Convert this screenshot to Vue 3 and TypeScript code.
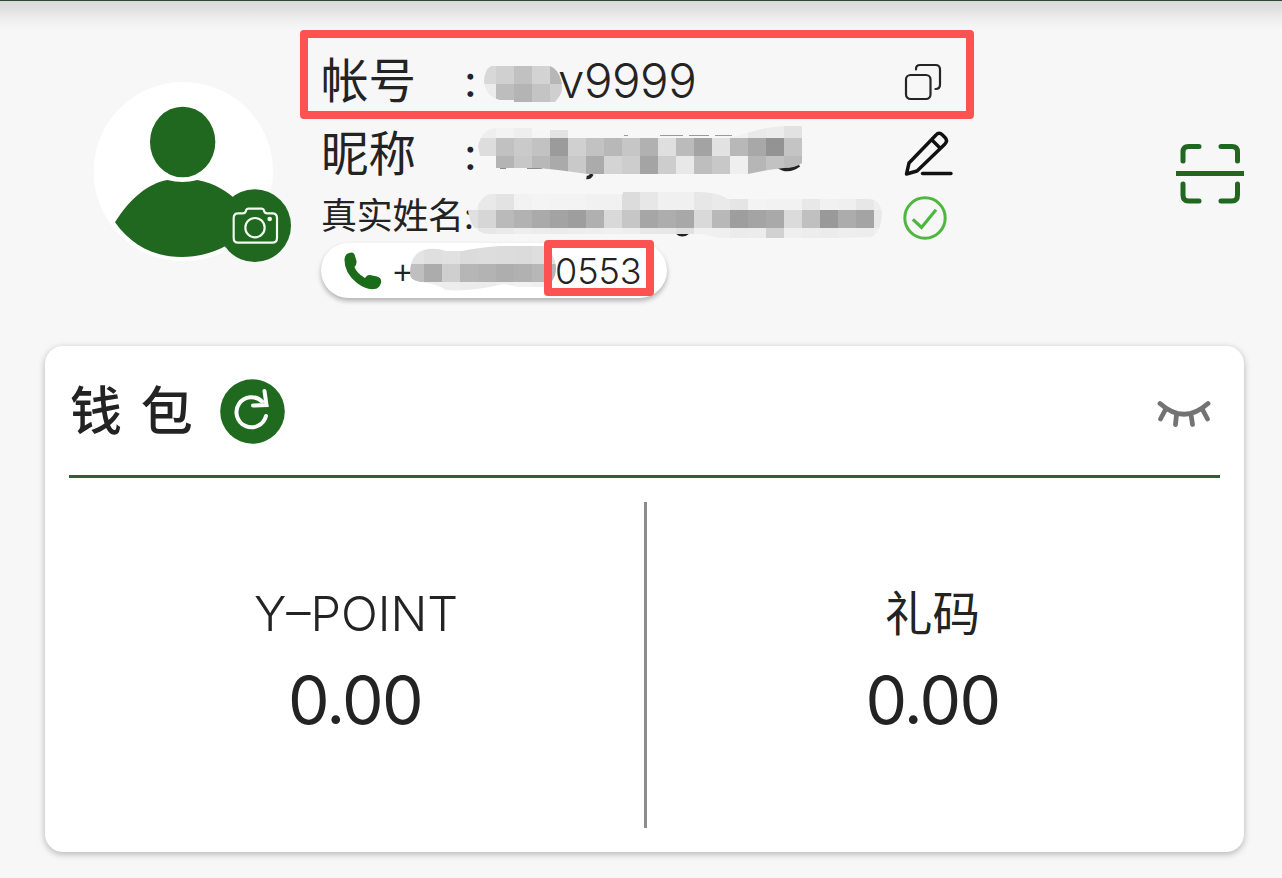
<script setup lang="ts">
interface Strip { x: number; y: number; h: number; first?: number; cells: string }
interface Mask { id: string; w: number; h: number; clip: string; strips: Strip[] }
interface Cell { x: number; y: number; w: number; h: number; fill: string }

const CELL = 18

function cellsOf(mask: Mask): Cell[] {
  return mask.strips.flatMap((s) => {
    let x = s.x
    return s.cells.split(' ').map((tone, i) => {
      const w = i === 0 && s.first ? s.first : CELL
      const cell = { x, y: s.y, w, h: s.h, fill: '#' + tone.repeat(3) }
      x += w
      return cell
    })
  })
}

const accountMask: Mask = {
  id: 'mask-account', w: 78, h: 36,
  clip: 'M7 0H66Q74 3 77 14Q80 24 75 31L71 36H30V34H16Q2 31 0 16Q0 4 7 0Z',
  strips: [
    { x: 0, y: 0, h: 18, first: 12, cells: 'd8 d0 c1 d3 b7' },
    { x: 0, y: 18, h: 18, first: 12, cells: 'ec bd b4 c4 cf' },
  ],
}
const nickMask: Mask = {
  id: 'mask-nick', w: 324, h: 48,
  clip: 'M0 20Q4 3 18 2H54V4H90V12H250L288 2L306 0H324V37Q318 42 306 42L290 44L270 48H110L80 44L60 42H18V30H2Z',
  strips: [
    { x: 0, y: 0, h: 12, cells: 'ee f3 ee f5 e3 f6 f6 f6 f6 f6 f6 f6 f6 f6 f2 e9 ec e2' },
    { x: 0, y: 12, h: 18, cells: 'dd c1 ca c2 9b d0 c2 b8 c6 b1 df bb a3 e2 b8 a8 93 c4' },
    { x: 0, y: 30, h: 18, cells: 'f4 b4 c7 b8 aa c9 ab d4 cd a4 cd e8 be c8 ef b6 c2 bb' },
  ],
}
const nameMask: Mask = {
  id: 'mask-name', w: 414, h: 48,
  clip: 'M0 18L8 18Q14 2 24 2H155V0H230Q250 0 260 7H400Q412 7 414 20Q414 38 404 45L370 46H250L235 42L20 42Q2 40 0 18Z',
  strips: [
    { x: 0, y: 0, h: 18, first: 10, cells: 'f2 e9 e3 f2 f4 f3 f3 f1 f1 dc e7 f0 f0 e7 ea e5 f3 f2 f2 e8 f1 ef e7 ee' },
    { x: 0, y: 18, h: 18, first: 10, cells: 'e0 d6 ba b2 aa a3 9e b0 d9 c6 a6 ad a8 d9 b8 9e a4 a9 db c0 99 ac a4 e9' },
    { x: 0, y: 36, h: 12, first: 10, cells: 'f0 e7 ea ee ec eb ed ee f0 ee e8 e7 e0 f0 ef eb ec d1 ef ed eb ee ed f0' },
  ],
}
const phoneMask: Mask = {
  id: 'mask-phone', w: 146, h: 46,
  clip: 'M0 28Q0 8 14 4Q25 1 36 5H52Q66 2 90 0H133Q146 8 146 23Q146 35 134 41H108L94 38Q60 46 36 44Q28 38 10 36Q0 34 0 28Z',
  strips: [
    { x: 0, y: 0, h: 18, first: 14, cells: 'e4 df e1 db dd dc db de e0' },
    { x: 0, y: 18, h: 18, first: 14, cells: 'bf ac cf b6 b3 ae b1 b7 b5' },
    { x: 0, y: 36, h: 10, first: 14, cells: 'f3 ef ed eb eb f0 f1 ef f0' },
  ],
}

const balances = [
  { name: 'Y–POINT', amount: '0.00', latin: true },
  { name: '礼码', amount: '0.00', latin: false },
]
</script>

<template>
  <main class="page">
    <div class="topbar"></div>
    <header class="profile">
      <svg class="avatar" viewBox="30 30 612 561">
        <circle cx="310" cy="305" r="269" fill="#fff" />
        <g fill="#206720">
          <ellipse cx="308" cy="216" rx="98" ry="106" />
          <path d="M105 457C150 385 205 340 262 330Q308 342 352 330C405 340 440 362 480 400L500 480C440 540 370 561 305 561C215 561 150 520 105 457Z" />
          <circle cx="524" cy="467" r="109" />
        </g>
        <g fill="none" stroke="#f1fbef" stroke-width="6.500" stroke-linejoin="round">
          <path d="M474 430H488Q497 430 498 422Q499 416 506 416H544Q551 416 552 422Q553 430 562 430H577Q591 430 591 444V504Q591 518 577 518H474Q461 518 461 504V444Q461 430 474 430Z" />
          <circle cx="525" cy="473" r="29" />
        </g>
        <circle cx="569" cy="447" r="7" fill="#f1fbef" />
      </svg>

      <section class="info">
        <div class="row account">
          <span class="label">帐号</span><span class="colon">:</span>
          <span class="value">v9999</span>
          <svg class="mask mask-account" :width="accountMask.w" :height="accountMask.h">
            <clipPath :id="accountMask.id"><path :d="accountMask.clip" /></clipPath>
            <g :clip-path="`url(#${accountMask.id})`" shape-rendering="crispEdges">
              <rect v-for="(c, i) in cellsOf(accountMask)" :key="i" :x="c.x" :y="c.y" :width="c.w" :height="c.h" :fill="c.fill" />
            </g>
          </svg>
          <svg class="copy" viewBox="0 0 38 38" fill="none" stroke="#252525" stroke-width="2.200" stroke-linecap="round">
            <rect x="2" y="12" width="24.5" height="24" rx="4.5" />
            <path d="M12 6.5V6Q12 2 16 2H31.5Q36 2 36 6.500V21.500Q36 26 31.500 26" />
          </svg>
        </div>

        <div class="row nick">
          <span class="label">昵称</span><span class="colon">:</span>
          <svg class="mask mask-nick" width="324" height="56">
            <g fill="none" stroke="#222" stroke-width="2">
              <path d="M146 9.500H150M182 9.500H205M211 9.500H231M237 9.500H254" stroke="#999" stroke-width="1" />
              <path d="M114 48Q112 52 108.500 51.500" stroke-width="3.500" />
              <path d="M22 41.500H28M49 41.500H64" />
              <path d="M300 40Q310 47 321 39" stroke-width="4" />
            </g>
            <clipPath :id="nickMask.id"><path :d="nickMask.clip" /></clipPath>
            <g :clip-path="`url(#${nickMask.id})`" shape-rendering="crispEdges">
              <rect v-for="(c, i) in cellsOf(nickMask)" :key="i" :x="c.x" :y="c.y" :width="c.w" :height="c.h" :fill="c.fill" />
            </g>
          </svg>
          <svg class="edit" viewBox="0 0 50 48" fill="none" stroke="#111" stroke-width="3.400" stroke-linejoin="round" stroke-linecap="round">
            <path d="M3.500 44L6 33L33 5Q36 1.500 39.500 5L42 7.500Q45 10.500 42 14L14 41Z M28.500 9.500L37 18" />
            <path d="M19.500 43.500H48" />
          </svg>
        </div>

        <div class="row realname">
          <span class="label small">真实姓名:</span>
          <svg class="mask mask-name" width="414" height="48">
            <path d="M208 40Q214 46 221 40" fill="none" stroke="#222" stroke-width="3" />
            <clipPath :id="nameMask.id"><path :d="nameMask.clip" /></clipPath>
            <g :clip-path="`url(#${nameMask.id})`" shape-rendering="crispEdges">
              <rect v-for="(c, i) in cellsOf(nameMask)" :key="i" :x="c.x" :y="c.y" :width="c.w" :height="c.h" :fill="c.fill" />
            </g>
          </svg>
          <svg class="verified" viewBox="0 0 44 44" fill="none" stroke="#4db73e" stroke-width="3" stroke-linecap="round">
            <circle cx="22" cy="22" r="20.200" />
            <path d="M11 24.500L18.500 31.500L32 15" stroke-width="3.200" stroke-linecap="square" />
          </svg>
        </div>

        <div class="phone">
          <svg class="handset" viewBox="0 0 38 38">
            <path fill="#1b6b1b" d="M0.500 7Q1 2 5 1Q10 -1 11 4L12.500 9Q13 12 10.500 15Q12.500 21 21 26Q23 22.500 26 23L33 24.500Q38 26 37 31Q35 37 30 37Q22 38 13 31Q0 21 0.500 7Z" />
          </svg>
          <span class="plus">+</span>
          <span class="digits">0553</span>
          <svg class="mask mask-phone" :width="phoneMask.w" :height="phoneMask.h">
            <clipPath :id="phoneMask.id"><path :d="phoneMask.clip" /></clipPath>
            <g :clip-path="`url(#${phoneMask.id})`" shape-rendering="crispEdges">
              <rect v-for="(c, i) in cellsOf(phoneMask)" :key="i" :x="c.x" :y="c.y" :width="c.w" :height="c.h" :fill="c.fill" />
            </g>
          </svg>
          <span class="highlight"></span>
        </div>
      </section>

      <svg class="scan" viewBox="0 0 68 62" fill="none" stroke="#20671f" stroke-width="5" stroke-linecap="round">
        <path d="M7 18V9Q7 3.500 12.500 3.500H23M45 3.500H56Q61.500 3.500 61.500 9V18M61.500 41V52Q61.500 58 56 58H45M23 58H12.500Q7 58 7 52V41" />
        <path d="M0 30.500H68" stroke-linecap="butt" />
      </svg>
    </header>

    <section class="wallet">
      <div class="wallet-head">
        <h1>钱 包</h1>
        <svg class="refresh" viewBox="0 0 65 65">
          <circle cx="32.500" cy="32.500" r="32.300" fill="#1f6a1e" />
          <g fill="none" stroke="#fff" stroke-width="4">
            <path d="M46 37A15 15 0 1 1 42 22.500" stroke-linecap="round" />
            <path d="M44.500 12L46.500 26L33 26.500" stroke-linecap="round" stroke-linejoin="miter" />
          </g>
        </svg>
        <svg class="eye" viewBox="0 0 54 28" fill="none" stroke="#737373" stroke-width="4.800" stroke-linecap="round">
          <path d="M3 3.500Q27 25 51 3.500M8.500 9.500L3.500 19M19.500 14.500L18.500 24.500M34 14.500L35.500 24.500M45.500 9.500L50.500 19" />
        </svg>
      </div>
      <div class="balances">
        <div v-for="b in balances" :key="b.name" class="balance">
          <span class="name" :class="{ latin: b.latin }">{{ b.name }}</span>
          <span class="amount">{{ b.amount }}</span>
        </div>
      </div>
    </section>
  </main>
</template>

<style>
body { margin: 0; }
</style>

<style scoped>
.page {
  width: 1282px;
  height: 878px;
  box-sizing: border-box;
  overflow: hidden;
  background: #f7f7f7;
  color: #232323;
  font-family: Inter, "Noto Sans CJK SC", sans-serif;
  font-weight: 400;
}
.page svg { display: block; flex: none; }
.topbar {
  height: 30px;
  box-sizing: border-box;
  border-top: 1px solid #30482f;
  background: linear-gradient(#dcd9da, #dfdddd 20%, #ececec 55%, #f7f7f7);
}
.profile {
  display: flex;
  align-items: flex-start;
  height: 316px;
  padding-left: 90px;
}
.avatar { width: 204px; height: 187px; margin-top: 50px; }
.info { width: 674px; margin-left: 6px; }
.row {
  position: relative;
  display: flex;
  align-items: center;
  box-sizing: border-box;
  padding-left: 21px;
}
.account {
  height: 89px;
  border: 8px solid #fc5352;
  border-radius: 4px;
  padding: 12px 0 0 13px;
}
.nick { height: 68px; padding-top: 1px; }
.realname { height: 56px; padding-top: 2px; }
.label { width: 143px; font-size: 47.500px; line-height: 60px; white-space: nowrap; }
.label.small { font-size: 36px; letter-spacing: -0.3px; width: 582px; }
.colon { width: 94px; font-size: 44px; line-height: 60px; }
.value { width: 346px; font-size: 47.500px; line-height: 60px; font-weight: 350; letter-spacing: -0.500px; }
.mask { position: absolute; }
.mask-account { left: 176px; top: 28px; }
.mask-nick { left: 178px; top: 7px; }
.mask-name { left: 168px; top: 5px; }
.mask-phone { left: 89px; top: 3px; }
.copy { width: 38px; height: 38px; margin-top: 2px; }
.nick .edit { width: 50px; height: 48px; margin: 1px 0 0 345px; }
.verified { width: 44px; height: 44px; margin-top: 3px; }
.phone {
  position: relative;
  display: flex;
  align-items: center;
  width: 346px;
  height: 55px;
  box-sizing: border-box;
  margin-left: 21px;
  padding-left: 23px;
  border-radius: 28px;
  background: #fff;
  box-shadow: 0 3px 5px rgba(0, 0, 0, 0.28);
  font-size: 36px;
  font-weight: 350;
}
.handset { width: 38px; height: 38px; }
.plus { width: 153px; margin: -2px 0 0 9px; }
.digits { margin: 1px 0 0 11px; letter-spacing: -0.1px; }
.highlight {
  position: absolute;
  left: 223px;
  top: -3px;
  width: 110px;
  height: 56px;
  box-sizing: border-box;
  border: 8px solid #fc5352;
  border-radius: 4px;
}
.scan { width: 68px; height: 62px; margin: 113px 0 0 202px; }
.wallet {
  width: 1199px;
  height: 506px;
  box-sizing: border-box;
  margin-left: 45px;
  padding: 0 24px;
  border-radius: 18px;
  background: #fff;
  box-shadow: 0 2px 7px rgba(0, 0, 0, 0.28);
}
.wallet-head {
  display: flex;
  align-items: center;
  height: 132px;
  box-sizing: border-box;
  padding-top: 1px;
  border-bottom: 3px solid #315f33;
}
h1 { box-sizing: border-box; width: 150.500px; margin: 2px 0 0; padding-left: 1px; font-size: 52px; line-height: 70px; font-weight: 500; white-space: nowrap; word-spacing: 5px; }
.refresh { width: 65px; height: 65px; }
.eye { width: 54px; height: 28px; margin: 6px 0 0 872px; }
.balances { display: flex; height: 374px; }
.balance {
  position: relative;
  display: flex;
  flex-direction: column;
  align-items: center;
  width: 575px;
  padding-top: 101px;
}
.balance:first-child { width: 574px; margin-right: 2px; }
.balance:first-child::after {
  content: "";
  position: absolute;
  right: -4px;
  top: 24px;
  width: 3px;
  height: 326px;
  background: #8c8c8c;
}
.name { font-size: 47.500px; line-height: 70px; }
.name.latin { font-size: 48.500px; font-weight: 350; }
.amount { margin-top: 11px; font-size: 66px; line-height: 80px; letter-spacing: -1.700px; }
.name.latin + .amount { margin-right: 2px; }
</style>
